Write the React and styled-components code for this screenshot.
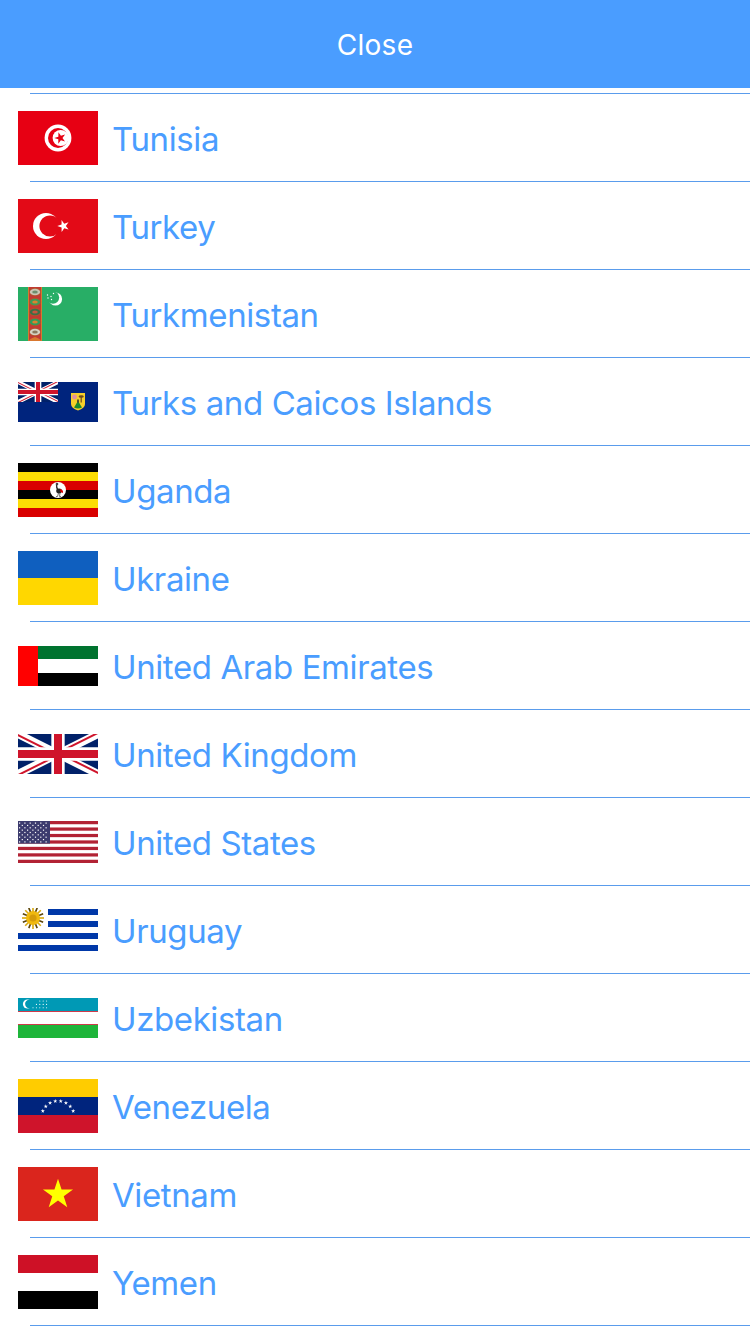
import React from 'react'
import styled, { createGlobalStyle } from 'styled-components'

const GlobalStyle = createGlobalStyle`
  html, body {
    margin: 0;
    padding: 0;
    background: #fff;
    font-family: Inter, "Liberation Sans", sans-serif;
  }
`

const Screen = styled.div`
  width: 750px;
  height: 1334px;
  overflow: hidden;
  background: #fff;
`

const CloseBar = styled.button`
  display: block;
  width: 100%;
  height: 88px;
  border: 0;
  padding: 2px 0 0;
  background: #4a9dff;
  color: #fff;
  font-family: inherit;
  font-size: 28px;
  font-weight: 380;
  letter-spacing: 0.3px;
`

const List = styled.ul`
  list-style: none;
  margin: 0;
  padding: 5px 0 0;
`

const Row = styled.li`
  display: flex;
  align-items: center;
  height: 87px;
  padding-left: 18px;
  border-top: 1px solid transparent;
  position: relative;

  &::before {
    content: '';
    position: absolute;
    top: -1px;
    left: 30px;
    right: 0;
    height: 1px;
    background: #5a9cec;
  }
`

const LastLine = styled.li`
  height: 1px;
  margin-left: 30px;
  background: #5a9cec;
`

const FlagBox = styled.svg`
  display: block;
  flex: none;
  width: 80px;
`

const Name = styled.span`
  margin-left: 14px;
  padding-top: 3px;
  color: #4a9dff;
  font-size: 33px;
  font-weight: 380;
  letter-spacing: -0.4px;
  white-space: nowrap;
`

const Flag = ({ h, children }) => (
  <FlagBox viewBox={`0 0 80 ${h}`} height={h}>
    {children}
  </FlagBox>
)

const Star = ({ cx, cy, r, fill, rot = 0 }) => {
  const pts = []
  for (let i = 0; i < 10; i++) {
    const a = (Math.PI / 5) * i - Math.PI / 2 + rot
    const rad = i % 2 ? r * 0.382 : r
    pts.push(`${(cx + rad * Math.cos(a)).toFixed(2)},${(cy + rad * Math.sin(a)).toFixed(2)}`)
  }
  return <polygon points={pts.join(' ')} fill={fill} />
}

const UnionJack = ({ id, width, height }) => (
  <svg x="0" y="0" width={width} height={height} viewBox="0 0 60 30" preserveAspectRatio="none">
    <clipPath id={id}>
      <path d="M30 15h30v15zv15H0zH0V0zV0h30z" />
    </clipPath>
    <rect width="60" height="30" fill="#012169" />
    <path d="M0 0L60 30M60 0L0 30" stroke="#fff" strokeWidth="6" />
    <path d="M0 0L60 30M60 0L0 30" stroke="#cf142b" strokeWidth="3" clipPath={`url(#${id})`} />
    <path d="M30 0V30M0 15H60" stroke="#fff" strokeWidth="10" />
    <path d="M30 0V30M0 15H60" stroke="#cf142b" strokeWidth="6" />
  </svg>
)

const Tunisia = () => (
  <Flag h={54}>
    <rect width="80" height="54" fill="#e70013" />
    <circle cx="40" cy="27" r="13.4" fill="#fff" />
    <circle cx="40" cy="27" r="10" fill="#e70013" />
    <circle cx="42.6" cy="27" r="8" fill="#fff" />
    <Star cx={42.2} cy={27} r={6} fill="#e70013" rot={-0.3} />
  </Flag>
)

const Turkey = () => (
  <Flag h={54}>
    <rect width="80" height="54" fill="#e30a17" />
    <circle cx="28" cy="27" r="13" fill="#fff" />
    <circle cx="32" cy="27" r="10.6" fill="#e30a17" />
    <Star cx={45.5} cy={27} r={6.2} fill="#fff" rot={-0.32} />
  </Flag>
)

const GULS = [
  [5, '#c9c6b4', '#6d8f6d'],
  [15, '#3f9a57', '#d9822f'],
  [25, '#3c6e47', '#c8553d'],
  [35, '#2f9c5a', '#d9822f'],
  [45, '#d5d2c4', '#8a7a5e'],
]

const Turkmenistan = () => (
  <Flag h={54}>
    <rect width="80" height="54" fill="#28ae66" />
    <rect x="10" width="14" height="54" fill="#c23a34" />
    <rect x="10" width="1" height="54" fill="#d9782f" />
    <rect x="23" width="1" height="54" fill="#d9782f" />
    {GULS.map(([y, outer, inner]) => (
      <g key={y}>
        <ellipse cx="17" cy={y} rx="6.2" ry="4.2" fill="#b5502c" />
        <ellipse cx="17" cy={y} rx="5.2" ry="3.3" fill={outer} />
        <ellipse cx="17" cy={y} rx="2.8" ry="1.6" fill={inner} />
      </g>
    ))}
    <path d="M17 50Q11 52 11 54H23Q23 52 17 50Z" fill="#d9782f" />
    <circle cx="37.5" cy="12" r="6.6" fill="#fff" />
    <circle cx="35" cy="10.6" r="6.2" fill="#28ae66" />
    {[[30, 11], [33, 9.5], [33.5, 12.5], [29.5, 8], [35.5, 6.5]].map(([x, y]) => (
      <circle key={x + '-' + y} cx={x} cy={y} r="0.7" fill="#fff" />
    ))}
  </Flag>
)

const TurksCaicos = () => (
  <Flag h={40}>
    <rect width="80" height="40" fill="#00247d" />
    <UnionJack id="ukTurks" width={40} height={20} />
    <path d="M53 11H67V22Q67 26 60 28.5Q53 26 53 22Z" fill="#f7cf2a" />
    <circle cx="56.5" cy="15" r="2.4" fill="#e58fa0" />
    <rect x="62.6" y="14.5" width="1.2" height="6" fill="#6d4a1f" />
    <ellipse cx="63.2" cy="14.5" rx="2.6" ry="1.2" fill="#6d4a1f" />
    <path d="M56 25.5L60 19L64 25.5Q60 27.5 56 25.5Z" fill="#1c8a2e" />
    <rect x="59.2" y="17.5" width="1.6" height="3" fill="#333" />
  </Flag>
)

const Uganda = () => (
  <Flag h={54}>
    {['#000', '#fcdc04', '#d90000', '#000', '#fcdc04', '#d90000'].map((c, i) => (
      <rect key={i} y={i * 9} width="80" height="9" fill={c} />
    ))}
    <circle cx="40" cy="27" r="8" fill="#fff" />
    <path d="M38.6 21.5Q38.2 25 40 27" fill="none" stroke="#333" strokeWidth="1.4" />
    <circle cx="39" cy="21" r="1.3" fill="#444" />
    <ellipse cx="41" cy="28" rx="2.8" ry="2.4" fill="#222" />
    <path d="M42 26Q45.5 26.5 45 30L42.5 29Z" fill="#d90000" />
    <path d="M40.5 30L39.5 33.5H38M42 30L41.5 33.5H43" fill="none" stroke="#555" strokeWidth="0.8" />
  </Flag>
)

const Ukraine = () => (
  <Flag h={54}>
    <rect width="80" height="27" fill="#0f5fbf" />
    <rect y="27" width="80" height="27" fill="#ffd700" />
  </Flag>
)

const Emirates = () => (
  <Flag h={40}>
    <rect x="20" width="60" height="13" fill="#00732f" />
    <rect x="20" y="13" width="60" height="14" fill="#fff" />
    <rect x="20" y="27" width="60" height="13" fill="#000" />
    <rect width="20" height="40" fill="#ff0000" />
  </Flag>
)

const Kingdom = () => (
  <Flag h={40}>
    <UnionJack id="ukMain" width={80} height={40} />
  </Flag>
)

const States = () => {
  const dots = []
  for (let r = 0; r < 9; r++) {
    const cols = r % 2 ? 5 : 6
    for (let c = 0; c < cols; c++) {
      dots.push(
        <rect key={r + '-' + c} x={(r % 2 ? 3.7 : 1) + c * 5.3} y={1.5 + r * 2.35} width="1.2" height="1.2" fill="#fff" />
      )
    }
  }
  return (
    <Flag h={42}>
      <rect width="80" height="42" fill="#fff" />
      {Array.from({ length: 7 }, (_, i) => (
        <rect key={i} y={i * 6.46} width="80" height="3.23" fill="#b22234" />
      ))}
      <rect width="32" height="22.6" fill="#3c3b6e" />
      {dots}
    </Flag>
  )
}

const Uruguay = () => (
  <Flag h={44}>
    {[0, 2, 4, 6].map((i) => (
      <rect key={i} x={i < 4 ? 30 : 0} y={1 + i * 6} width={i < 4 ? 50 : 80} height="6" fill="#0038a8" />
    ))}
    {Array.from({ length: 16 }, (_, i) => {
      const a = (Math.PI / 8) * i
      return (
        <line
          key={i}
          x1={15 + 5 * Math.cos(a)}
          y1={10 + 5 * Math.sin(a)}
          x2={15 + 11 * Math.cos(a)}
          y2={10 + 11 * Math.sin(a)}
          stroke={i % 2 ? '#5c4508' : '#d9a90c'}
          strokeWidth="1.6"
        />
      )
    })}
    <circle cx="15" cy="10" r="7" fill="#f0b90e" />
    <circle cx="15" cy="10" r="3.6" fill="#d59c0a" />
  </Flag>
)

const Uzbekistan = () => {
  const dots = []
  for (let r = 0; r < 3; r++) {
    for (let c = 0; c < 5; c++) {
      if (r + c >= 2) dots.push(<circle key={r + '-' + c} cx={15 + c * 3.4} cy={3 + r * 3.4} r="0.55" fill="#fff" />)
    }
  }
  return (
    <Flag h={40}>
      <rect width="80" height="13" fill="#0099b5" />
      <rect y="13" width="80" height="1" fill="#ce3a4a" />
      <rect y="14" width="80" height="12" fill="#fff" />
      <rect y="26" width="80" height="1" fill="#ce3a4a" />
      <rect y="27" width="80" height="13" fill="#1eb53a" />
      <circle cx="9.5" cy="6" r="4.6" fill="#fff" />
      <circle cx="11.3" cy="6" r="4.2" fill="#0099b5" />
      {dots}
    </Flag>
  )
}

const Venezuela = () => {
  const stars = Array.from({ length: 8 }, (_, i) => {
    const a = Math.PI * (1.128 + (0.744 * i) / 7)
    return <Star key={i} cx={40 + 16.5 * Math.cos(a)} cy={38.5 + 16.5 * Math.sin(a)} r={2.2} fill="#fff" />
  })
  return (
    <Flag h={54}>
      <rect width="80" height="18" fill="#ffcc00" />
      <rect y="18" width="80" height="18" fill="#00247d" />
      <rect y="36" width="80" height="18" fill="#cf142b" />
      {stars}
    </Flag>
  )
}

const Vietnam = () => (
  <Flag h={54}>
    <rect width="80" height="54" fill="#da251d" />
    <Star cx={40} cy={27.5} r={15.8} fill="#ffff00" />
  </Flag>
)

const Yemen = () => (
  <Flag h={54}>
    <rect width="80" height="18" fill="#ce1126" />
    <rect y="18" width="80" height="18" fill="#fff" />
    <rect y="36" width="80" height="18" fill="#000" />
  </Flag>
)

const COUNTRIES = [
  ['Tunisia', Tunisia],
  ['Turkey', Turkey],
  ['Turkmenistan', Turkmenistan],
  ['Turks and Caicos Islands', TurksCaicos],
  ['Uganda', Uganda],
  ['Ukraine', Ukraine],
  ['United Arab Emirates', Emirates],
  ['United Kingdom', Kingdom],
  ['United States', States],
  ['Uruguay', Uruguay],
  ['Uzbekistan', Uzbekistan],
  ['Venezuela', Venezuela],
  ['Vietnam', Vietnam],
  ['Yemen', Yemen],
]

export default function App() {
  return (
    <Screen>
      <GlobalStyle />
      <CloseBar>Close</CloseBar>
      <List>
        {COUNTRIES.map(([name, FlagIcon]) => (
          <Row key={name}>
            <FlagIcon />
            <Name>{name}</Name>
          </Row>
        ))}
        <LastLine />
      </List>
    </Screen>
  )
}
